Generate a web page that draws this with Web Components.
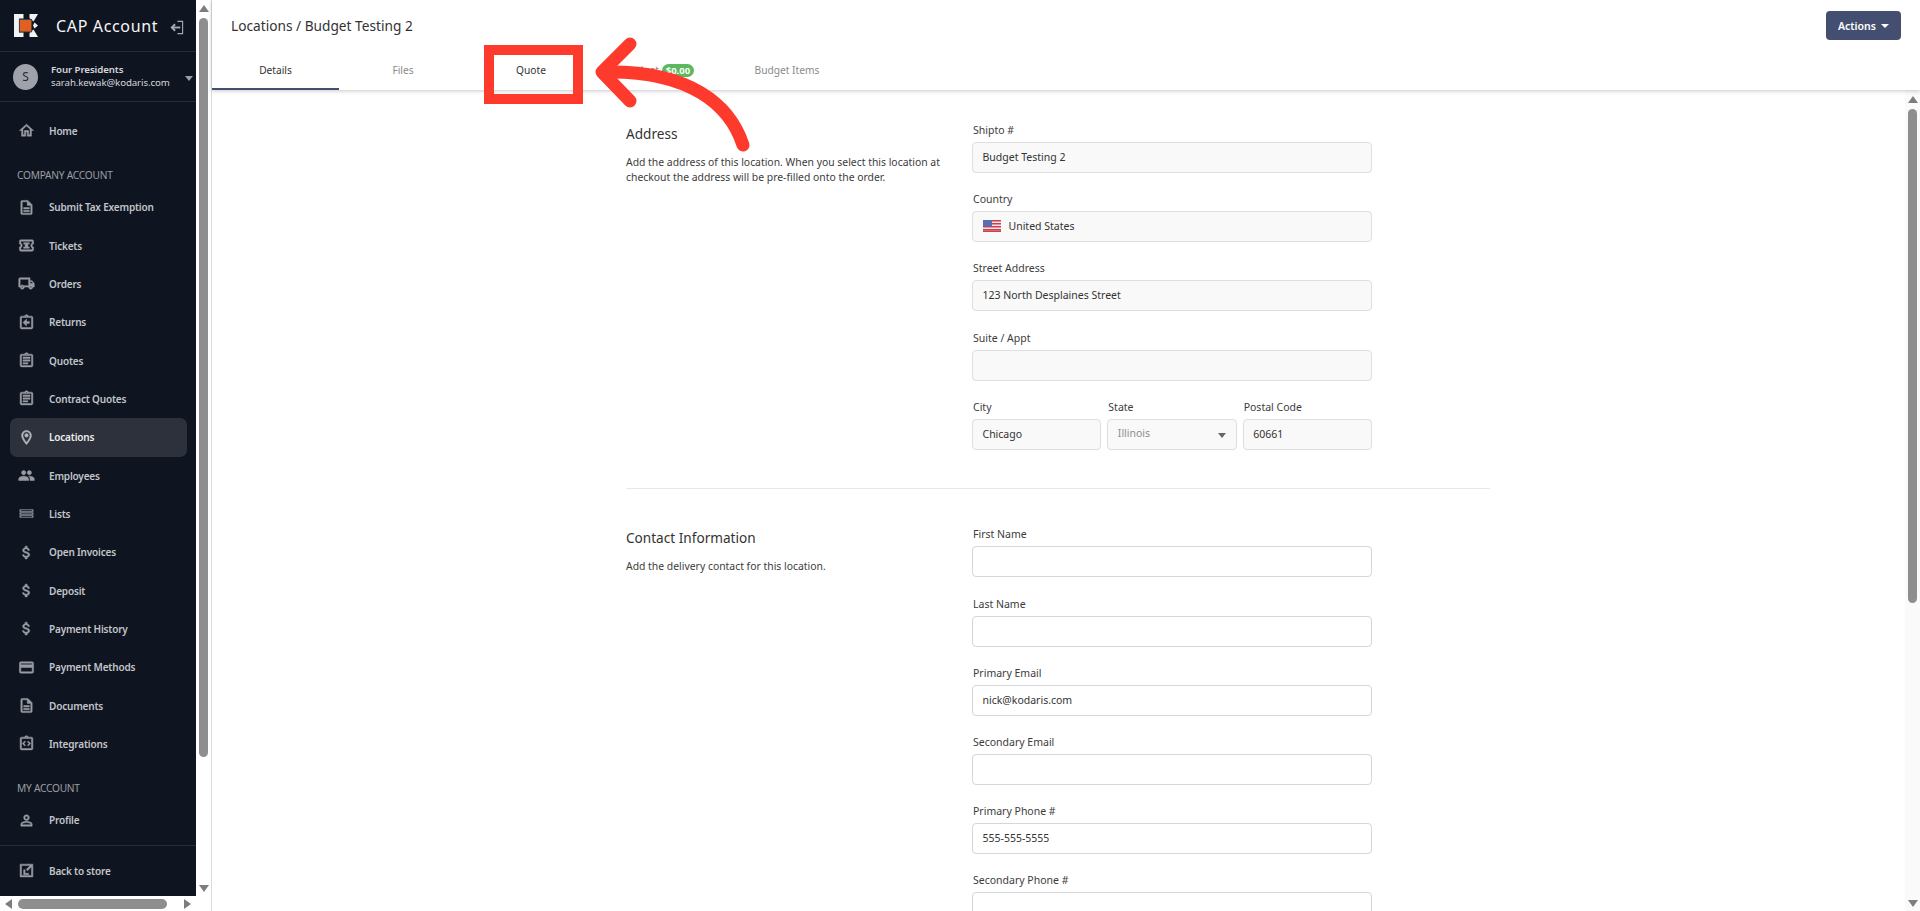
<!DOCTYPE html>
<html><head><meta charset="utf-8"><title>Locations</title>
<style>
html,body{margin:0;height:100%;overflow:hidden;background:#fff;font-family:"Noto Sans","Open Sans",sans-serif}
</style></head><body>
<cap-app>
  <cap-sidebar slot="side">
    <cap-nav icon="home">Home</cap-nav>
    <cap-section>COMPANY ACCOUNT</cap-section>
    <cap-nav icon="doc">Submit Tax Exemption</cap-nav>
    <cap-nav icon="ticket">Tickets</cap-nav>
    <cap-nav icon="truck">Orders</cap-nav>
    <cap-nav icon="return">Returns</cap-nav>
    <cap-nav icon="assign">Quotes</cap-nav>
    <cap-nav icon="assign">Contract Quotes</cap-nav>
    <cap-nav icon="place" active>Locations</cap-nav>
    <cap-nav icon="people">Employees</cap-nav>
    <cap-nav icon="lists">Lists</cap-nav>
    <cap-nav icon="money">Open Invoices</cap-nav>
    <cap-nav icon="money">Deposit</cap-nav>
    <cap-nav icon="money">Payment History</cap-nav>
    <cap-nav icon="card">Payment Methods</cap-nav>
    <cap-nav icon="doc">Documents</cap-nav>
    <cap-nav icon="integr">Integrations</cap-nav>
    <cap-section>MY ACCOUNT</cap-section>
    <cap-nav icon="person">Profile</cap-nav>
  </cap-sidebar>
  <cap-header slot="head" heading="Locations / Budget Testing 2"></cap-header>
  <cap-form-section heading="Address">
    <span slot="desc">Add the address of this location. When you select this location at checkout the address will be pre-filled onto the order.</span>
    <cap-field label="Shipto #" value="Budget Testing 2" filled></cap-field>
    <cap-field label="Country" value="United States" filled flag></cap-field>
    <cap-field label="Street Address" value="123 North Desplaines Street" filled></cap-field>
    <cap-field label="Suite / Appt" value="" filled></cap-field>
    <cap-row>
      <cap-field label="City" value="Chicago" filled></cap-field>
      <cap-field label="State" value="Illinois" filled select></cap-field>
      <cap-field label="Postal Code" value="60661" filled></cap-field>
    </cap-row>
  </cap-form-section>
  <cap-rule></cap-rule>
  <cap-form-section heading="Contact Information">
    <span slot="desc">Add the delivery contact for this location.</span>
    <cap-field label="First Name" value=""></cap-field>
    <cap-field label="Last Name" value=""></cap-field>
    <cap-field label="Primary Email" value="nick@kodaris.com"></cap-field>
    <cap-field label="Secondary Email" value=""></cap-field>
    <cap-field label="Primary Phone #" value="555-555-5555"></cap-field>
    <cap-field label="Secondary Phone #" value=""></cap-field>
  </cap-form-section>
</cap-app>
<cap-annotation></cap-annotation>
<script>
const ICONS={
home:'<path d="M12 5.69l5 4.5V18h-2v-6H9v6H7v-7.81l5-4.5M12 3L2 12h3v8h6v-6h2v6h6v-8h3L12 3z"/>',
doc:'<path d="M8 16h8v2H8zm0-4h8v2H8zm6-10H6c-1.1 0-2 .9-2 2v16c0 1.1.89 2 1.99 2H18c1.1 0 2-.9 2-2V8l-6-6zm4 18H6V4h7v5h5v11z"/>',
ticket:'<path d="M22 10V6c0-1.11-.9-2-2-2H4c-1.1 0-1.99.89-1.99 2v4c1.1 0 1.99.9 1.99 2s-.89 2-2 2v4c0 1.1.9 2 2 2h16c1.1 0 2-.9 2-2v-4c-1.1 0-2-.9-2-2s.9-2 2-2zm-2-1.46c-1.19.69-2 1.99-2 3.46s.81 2.77 2 3.46V18H4v-2.54c1.19-.69 2-1.99 2-3.46 0-1.48-.8-2.77-1.99-3.46L4 6h16v2.54z"/><path d="M8 8h8v2h-2v4h2v2H8v-2h2v-4H8z"/>',
truck:'<path d="M20 8h-3V4H3c-1.1 0-2 .9-2 2v11h2c0 1.66 1.34 3 3 3s3-1.34 3-3h6c0 1.66 1.34 3 3 3s3-1.34 3-3h2v-5l-3-4zm-.5 1.5l1.96 2.5H17V9.5h2.5zM6 18c-.55 0-1-.45-1-1s.45-1 1-1 1 .45 1 1-.45 1-1 1zm2.22-3c-.55-.61-1.33-1-2.22-1s-1.67.39-2.22 1H3V6h12v9H8.22zM18 18c-.55 0-1-.45-1-1s.45-1 1-1 1 .45 1 1-.45 1-1 1z"/>',
return:'<path d="M19 3h-4.18C14.4 1.84 13.3 1 12 1s-2.4.84-2.82 2H5c-1.1 0-2 .9-2 2v14c0 1.1.9 2 2 2h14c1.1 0 2-.9 2-2V5c0-1.1-.9-2-2-2zm-7-.25c.41 0 .75.34.75.75s-.34.75-.75.75-.75-.34-.75-.75.34-.75.75-.75zM19 19H5V5h14v14z"/><path d="M16 10.5h-4V7l-5 5 5 5v-3.5h4z"/>',
assign:'<path d="M7 15h7v2H7zm0-4h10v2H7zm0-4h10v2H7zm12-4h-4.18C14.4 1.84 13.3 1 12 1c-1.3 0-2.4.84-2.82 2H5c-1.1 0-2 .9-2 2v14c0 1.1.9 2 2 2h14c1.1 0 2-.9 2-2V5c0-1.1-.9-2-2-2zm-7-.25c.41 0 .75.34.75.75s-.34.75-.75.75-.75-.34-.75-.75.34-.75.75-.75zM19 19H5V5h14v14z"/>',
place:'<path d="M12 2C8.13 2 5 5.13 5 9c0 5.25 7 13 7 13s7-7.75 7-13c0-3.87-3.13-7-7-7zM7 9c0-2.76 2.24-5 5-5s5 2.24 5 5c0 2.88-2.88 7.19-5 9.88C9.92 16.21 7 11.85 7 9z"/><circle cx="12" cy="9" r="2.5"/>',
people:'<path d="M16 11c1.66 0 2.99-1.34 2.99-3S17.66 5 16 5c-1.66 0-3 1.34-3 3s1.34 3 3 3zm-8 0c1.66 0 2.99-1.34 2.99-3S9.66 5 8 5C6.34 5 5 6.34 5 8s1.34 3 3 3zm0 2c-2.33 0-7 1.17-7 3.5V19h14v-2.5c0-2.33-4.67-3.5-7-3.5zm8 0c-.29 0-.62.02-.97.05 1.16.84 1.97 1.97 1.97 3.45V19h6v-2.5c0-2.33-4.67-3.5-7-3.5z"/>',
lists:'<path d="M2.500 6.500h19v3h-19zm0 4h19v3h-19zm0 4h19v3h-19z" opacity=".85"/><path d="M4.500 7.500h15v1h-15zm0 4h15v1h-15zm0 4h15v1h-15z" fill="#0f1520" stroke="none"/>',
money:'<path d="M11.8 10.9c-2.27-.59-3-1.2-3-2.15 0-1.09 1.01-1.85 2.7-1.85 1.78 0 2.44.85 2.5 2.1h2.21c-.07-1.72-1.12-3.3-3.21-3.81V3h-3v2.16c-1.94.42-3.5 1.68-3.5 3.61 0 2.31 1.91 3.46 4.7 4.13 2.5.6 3 1.48 3 2.41 0 .69-.49 1.79-2.7 1.79-2.06 0-2.87-.92-2.98-2.1h-2.2c.12 2.19 1.76 3.42 3.68 3.83V21h3v-2.15c1.95-.37 3.5-1.5 3.5-3.55 0-2.84-2.43-3.81-4.7-4.4z"/>',
card:'<path d="M20 4H4c-1.11 0-1.99.89-1.99 2L2 18c0 1.11.89 2 2 2h16c1.11 0 2-.89 2-2V6c0-1.11-.89-2-2-2zm0 14H4v-6h16v6zm0-10H4V6h16v2z"/>',
integr:'<path d="M19 3h-4.18C14.4 1.84 13.3 1 12 1s-2.4.84-2.82 2H5c-1.1 0-2 .9-2 2v14c0 1.1.9 2 2 2h14c1.1 0 2-.9 2-2V5c0-1.1-.9-2-2-2zm-7-.25c.41 0 .75.34.75.75s-.34.75-.75.75-.75-.34-.75-.75.34-.75.75-.75zM19 19H5V5h14v14z"/><path d="M9.5 8.500L6 12l3.500 3.500 1.200-1.200L8.400 12l2.300-2.300zm5 0l-1.200 1.200 2.300 2.300-2.300 2.300 1.200 1.200L18 12z"/>',
person:'<path d="M12 5.9c1.16 0 2.1.94 2.1 2.1s-.94 2.1-2.1 2.1S9.9 9.16 9.9 8s.94-2.1 2.1-2.1m0 9c2.97 0 6.1 1.46 6.1 2.1v1.1H5.9V17c0-.64 3.13-2.1 6.1-2.1M12 4C9.79 4 8 5.79 8 8s1.79 4 4 4 4-1.79 4-4-1.79-4-4-4zm0 9c-2.67 0-8 1.34-8 4v3h16v-3c0-2.66-5.33-4-8-4z"/>',
launch:'<path d="M3 3h12v2H5v14h14V9h2v12H3z"/><path d="M21 3v7l-2.500-2.500-5 5-2-2 5-5L14 3z"/><path d="M8 11h2v5h5v2H8z"/>'
};
function def(name,html,init){customElements.define(name,class extends HTMLElement{
  constructor(){super();this.attachShadow({mode:'open'}).innerHTML=html;}
  connectedCallback(){init&&init.call(this,this.shadowRoot);}
});}
const FS='font-family:"Noto Sans","Open Sans",sans-serif;';

def('cap-vbar',`<style>
:host{display:flex;flex-direction:column;align-items:center;width:15px;background:var(--bg,#fafafa);flex:none;height:100%;box-sizing:border-box}
.t{width:0;height:0;border:5px solid transparent;border-top:0;border-bottom:7px solid #7d7d7d;margin:var(--at,5px) 0 var(--ag,6px)}
.d{width:0;height:0;border:5px solid transparent;border-bottom:0;border-top:7px solid #7d7d7d;margin:auto 0 var(--ab,4px)}
.th{width:9px;background:#8e8e8e;border-radius:5px;height:var(--th,100px)}
</style><div class="t"></div><div class="th"></div><div class="d"></div>`);

def('cap-hbar',`<style>
:host{display:flex;align-items:center;height:15px;background:#fff;box-sizing:border-box;flex:none}
.l{width:0;height:0;border:5px solid transparent;border-left:0;border-right:7px solid #7d7d7d;margin-left:5px;margin-right:6px}
.r{width:0;height:0;border:5px solid transparent;border-right:0;border-left:7px solid #7d7d7d;margin-left:auto;margin-right:20px}
.th{width:149px;height:10px;background:#8e8e8e;border-radius:5px}
</style><div class="l"></div><div class="th"></div><div class="r"></div>`);

def('cap-app',`<style>
:host{display:flex;height:911px;width:1920px;overflow:hidden;${FS}}
.left{width:211px;flex:none;display:flex;flex-direction:column}
.lt{flex:1;display:flex;min-height:0}
::slotted([slot=side]){width:196px;flex:none}
.vb{--th:739px;--bg:#fff}
.main{flex:1;min-width:0;display:flex;flex-direction:column;position:relative;border-left:1px solid #dcdcdc;box-sizing:border-box}
.body{flex:1;display:flex;min-height:0}
.scroll{flex:1;overflow:hidden;min-width:0}
.inner{width:864px;margin-left:414px;padding-top:32px}
.mb{--th:494px;--at:6px;--ag:6px;--ab:4px}
</style>
<div class="left"><div class="lt"><slot name="side"></slot><cap-vbar class="vb"></cap-vbar></div><cap-hbar></cap-hbar></div>
<div class="main"><slot name="head"></slot>
<div class="body"><div class="scroll"><div class="inner"><slot></slot></div></div><cap-vbar class="mb"></cap-vbar></div></div>`);

def('cap-sidebar',`<style>
:host{display:flex;flex-direction:column;background:#0f1520;color:#c8cad0;overflow:hidden;height:100%}
.brand{height:51px;display:flex;align-items:center;border-bottom:1px solid #282d38;flex:none}
.logo{margin-left:14px;width:24px;height:23px;flex:none}
.name{margin-left:18px;font-size:16px;color:#f4f5f7;letter-spacing:.65px;white-space:nowrap;line-height:20px;margin-top:1px}
.exit{margin-left:11px;width:15px;height:15px;margin-top:3px}
.user{height:49px;display:flex;align-items:center;border-bottom:1px solid #282d38;position:relative;flex:none}
.av{margin-left:13px;width:25px;height:26px;border-radius:50%;background:#9fa2aa;color:#222a38;font-size:12px;display:flex;align-items:center;justify-content:center;flex:none}
.who{margin-left:13px;font-size:9.7px;line-height:12.5px;white-space:nowrap;letter-spacing:-.1px}
.who b{font-weight:600;color:#d6d7da;display:block}
.who span{color:#d6d7da}
.car{position:absolute;left:185px;top:24px;width:0;height:0;border:4px solid transparent;border-top:5px solid #9b9ea6;border-bottom:0}
.nav{flex:1;padding-top:10px;display:flex;flex-direction:column;min-height:0}
.foot{border-top:1px solid #282d38;height:50px;display:flex;align-items:center;flex:none}
</style>
<div class="brand">
<svg class="logo" viewBox="0 0 24 23"><path fill="#f2f2f2" d="M0 0h9.500v4.500H5v14h4.500V23H0z"/><path fill="#f2f2f2" d="M15.500 0H24l-4.500 7.500-4-3.500zM15.500 23H24l-4.500-7.500-4 3.500zM20.500 8.500l3.500 3-3.500 3-1.500-3z"/><rect x="5.300" y="5.500" width="12.400" height="12.400" fill="#e0601f" stroke="#3a3f49" stroke-width=".8"/></svg>
<div class="name">CAP Account</div>
<svg class="exit" viewBox="0 0 16 16" fill="none" stroke="#a7a9af" stroke-width="1.200"><path d="M9 1.500h5.500v13H9"/><path d="M12 8H3" stroke-width="2"/><path d="M6.500 4.500L3 8l3.500 3.500" stroke-width="2"/></svg>
</div>
<div class="user"><div class="av">S</div><div class="who"><b>Four Presidents</b><span>sarah.kewak@kodaris.com</span></div><div class="car"></div></div>
<div class="nav"><slot></slot></div>
<div class="foot"><cap-nav icon="launch" style="width:100%">Back to store</cap-nav></div>`);

def('cap-nav',`<style>
:host{display:block;height:38.33px;flex:none}
.i{height:38.33px;margin:0 9px 0 10px;border-radius:7px;display:flex;align-items:center;box-sizing:border-box;padding-left:7.500px;padding-bottom:.5px;font-size:10px;letter-spacing:-.18px;font-weight:600;color:#c3c5ca;white-space:nowrap}
:host([active]) .i{background:#2d313c;color:#eceded}
svg{width:17px;height:17px;fill:#9a9ca3;stroke:#9a9ca3;stroke-width:.7;flex:none;margin-right:14.500px}
:host([active]) svg{fill:#b4b6bb;stroke:#b4b6bb}
</style><div class="i"><svg viewBox="0 0 24 24"></svg><slot></slot></div>`,function(r){r.querySelector('svg').innerHTML=ICONS[this.getAttribute('icon')]||'';});

def('cap-section',`<style>
:host{display:flex;align-items:center;height:24px;padding-left:17px;font-size:10.2px;color:#9b9da3;margin-top:13px;margin-bottom:1px;flex:none;letter-spacing:-.25px}
</style><slot></slot>`);

def('cap-header',`<style>
:host{display:block;height:90px;box-shadow:0 1px 4px rgba(0,0,0,.22);position:relative;z-index:2;background:#fff;flex:none}
.top{height:52px;display:flex;align-items:center;justify-content:space-between;padding:0 19px;box-sizing:border-box}
h1{margin:0;font-weight:400;font-size:13.7px;color:#333;margin-top:-1px}
button{all:unset;background:#434e70;color:#fff;width:75px;height:29px;border-radius:4px;font-size:10.500px;font-weight:600;display:flex;align-items:center;justify-content:center;gap:5px;margin-top:-1px}
.c{width:0;height:0;border:4px solid transparent;border-top:4px solid #fff;border-bottom:0}
</style>
<div class="top"><h1></h1><button>Actions<span class="c"></span></button></div>
<cap-tabs></cap-tabs>`,function(r){r.querySelector('h1').textContent=this.getAttribute('heading');});

def('cap-tabs',`<style>
:host{display:flex;height:38px}
.t{width:128px;display:flex;align-items:center;justify-content:center;gap:3px;font-size:10.2px;color:#8a8a8a;box-sizing:border-box;padding-bottom:2px;flex:none}
.a{color:#333;width:127px;border-bottom:2px solid #434e70;padding-bottom:0}
.q{color:#333}
.b{background:#5cb85c;color:#fff;border-radius:7px;font-size:9.500px;font-weight:700;height:13px;line-height:13px;width:32px;text-align:center}
</style>
<div class="t a">Details</div><div class="t">Files</div><div class="t q">Quote</div><div class="t">Budget <span class="b">$0.00</span></div><div class="t">Budget Items</div>`);

def('cap-form-section',`<style>
:host{display:grid;grid-template-columns:346px 400px}
h2{margin:0;font-weight:400;font-size:13.6px;color:#333;line-height:20px;margin-top:2px}
p{margin:0;font-size:10.400px;line-height:15.500px;color:#3c3c3c;margin-top:10.500px;width:335px}
.r{display:flex;flex-direction:column}
</style><div><h2></h2><p><slot name="desc"></slot></p></div><div class="r"><slot></slot></div>`,function(r){r.querySelector('h2').textContent=this.getAttribute('heading');});

def('cap-field',`<style>
:host{display:block;height:69.200px;min-width:0;font-size:10.500px;color:#3c3c3c;flex:none}
label{display:block;line-height:13px;height:13px;margin-top:2px;margin-bottom:5px;padding-left:1px}
.box{height:31px;box-sizing:border-box;border:1px solid #d4d6dc;border-radius:4px;display:flex;align-items:center;padding:0 9.500px 1px;background:#fff;color:#333;font-size:10.500px;white-space:nowrap;position:relative}
:host([filled]) .box{background:#f9f9f9;border-color:#dedede}
svg{width:18px;height:12px;margin-right:8px;flex:none}
:host([select]) .box{color:#8d8d8d;padding-bottom:3px}
.c{position:absolute;right:10px;top:13px;width:0;height:0;border:4px solid transparent;border-top:5px solid #666;border-bottom:0}
</style><label></label><div class="box"><span class="v"></span></div>`,function(r){
  r.querySelector('label').textContent=this.getAttribute('label');
  r.querySelector('.v').textContent=this.getAttribute('value');
  const box=r.querySelector('.box');
  if(this.hasAttribute('flag')){box.insertAdjacentHTML('afterbegin','<svg viewBox="0 0 18 12"><rect width="18" height="12" fill="#f3e6e6"/><path d="M0 0h18v1.500H0zM0 3h18v1.500H0zM0 6h18v1.500H0zM0 9h18v1.500H0z" fill="#c9414f"/><rect y="10.500" width="18" height="1.500" fill="#c9414f"/><rect width="9" height="6.500" fill="#5a6db0"/></svg>');}
  if(this.hasAttribute('select')){box.insertAdjacentHTML('beforeend','<span class="c"></span>');}
});

def('cap-row',`<style>
:host{display:grid;grid-template-columns:repeat(3,1fr);column-gap:6px;height:69.200px;flex:none}
</style><slot></slot>`);

def('cap-rule',`<style>:host{display:block;height:1px;background:#e8e8e8;margin:20px 0 37.500px}</style>`);

def('cap-annotation',`<style>
:host{display:block;position:absolute;left:0;top:0;width:1920px;height:911px;pointer-events:none;z-index:10}
svg{display:block}
</style>
<svg width="1920" height="911" viewBox="0 0 1920 911" fill="none" stroke="#fe3a2d">
<rect x="489" y="50" width="89" height="49" stroke-width="10"/>
<path d="M743 145C730 105 690 70 604 72" stroke-width="13" stroke-linecap="round"/>
<path d="M630 44L602 72L630 101" stroke-width="13" stroke-linecap="round" stroke-linejoin="round"/>
</svg>`);
</script>
</body></html>
